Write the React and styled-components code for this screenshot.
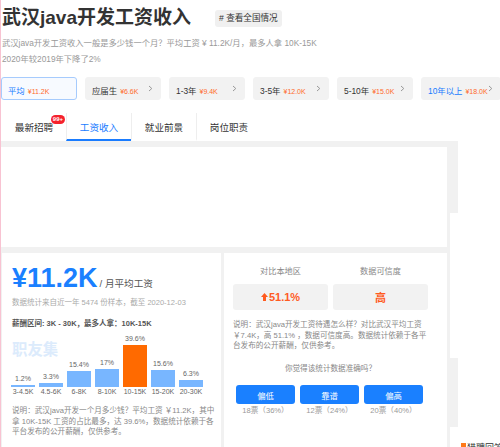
import React from "react";
import styled, { createGlobalStyle } from "styled-components";

const GlobalStyle = createGlobalStyle`
  html, body {
    margin: 0;
    padding: 0;
    background: #fff;
  }
  body {
    font-family: "Liberation Sans", "Noto Sans CJK SC", sans-serif;
    color: #333;
  }
`;

const levels = [
  { label: "平均", price: "¥11.2K", active: true },
  { label: "应届生", price: "¥6.6K" },
  { label: "1-3年", price: "¥9.4K" },
  { label: "3-5年", price: "¥12.0K" },
  { label: "5-10年", price: "¥15.0K" },
  { label: "10年以上", price: "¥18.0K", highlight: true },
];

const navTabs = ["最新招聘", "工资收入", "就业前景", "岗位职责"];

const bars = [
  { range: "3-4.5K", pct: 1.2 },
  { range: "4.5-6K", pct: 3.3 },
  { range: "6-8K", pct: 15.4 },
  { range: "8-10K", pct: 17 },
  { range: "10-15K", pct: 39.6, top: true },
  { range: "15-20K", pct: 15.6 },
  { range: "20-30K", pct: 6.3 },
];

const votes = [
  { label: "偏低", count: "18票（36%）" },
  { label: "靠谱", count: "12票（24%）" },
  { label: "偏高", count: "20票（40%）" },
];

const App = () => {
  return (
    <>
      <GlobalStyle />
      <Page>
        <Header>
          <TitleRow>
            <Title>武汉java开发工资收入</Title>
            <NationBadge># 查看全国情况</NationBadge>
          </TitleRow>
          <Summary>
            武汉java开发工资收入一般是多少钱一个月？平均工资 ¥ 11.2K/月，最多人拿 10K-15K
            <br />
            2020年较2019年下降了2%
          </Summary>
          <LevelRow>
            {levels.map((l) => (
              <LevelTab key={l.label} $active={l.active}>
                <span>
                  <LevelName $blue={l.active || l.highlight}>{l.label}</LevelName>
                  <LevelPrice>{l.price}</LevelPrice>
                </span>
                {!l.active && (
                  <svg width="5" height="7" viewBox="0 0 5 7">
                    <polyline points="1,1 3.8,3.5 1,6" fill="none" stroke="#999" strokeWidth="1" />
                  </svg>
                )}
              </LevelTab>
            ))}
          </LevelRow>
        </Header>

        <NavBar>
          {navTabs.map((t, i) => (
            <NavTab key={t} $active={i === 1} $first={i === 0}>
              {t}
              {i === 0 && <HotBadge>99+</HotBadge>}
            </NavTab>
          ))}
        </NavBar>

        <Content>
          <Main>
            <Panel />
            <CardRow>
              <Card>
                <BigRow>
                  <BigNumber>¥11.2K</BigNumber>
                  <Unit>/ 月平均工资</Unit>
                </BigRow>
                <Note>数据统计来自近一年 5474 份样本，截至 2020-12-03</Note>
                <RangeText>薪酬区间: 3K - 30K，最多人拿：10K-15K</RangeText>
                <Chart>
                  <Watermark>职友集</Watermark>
                  {bars.map((b) => (
                    <Column key={b.range}>
                      <Pct>{b.pct}%</Pct>
                      <Bar $top={b.top} style={{ height: Math.max(2, b.pct * 1.06) }} />
                      <RangeLabel>{b.range}</RangeLabel>
                    </Column>
                  ))}
                </Chart>
                <Explain>
                  说明：武汉java开发一个月多少钱？平均工资 ￥11.2K，其中
                  <br />
                  拿 10K-15K 工资的占比最多，达 39.6%，数据统计依赖于各
                  <br />
                  平台发布的公开薪酬，仅供参考。
                </Explain>
              </Card>

              <SideCard>
                <StatGrid>
                  <Stat>
                    <StatLabel>对比本地区</StatLabel>
                    <StatBox>
                      <svg width="7" height="8" viewBox="0 0 7 8">
                        <path d="M3.5 0 L7 4 L5 4 L5 8 L2 8 L2 4 L0 4 Z" fill="#ff5b1f" />
                      </svg>
                      51.1%
                    </StatBox>
                  </Stat>
                  <Stat>
                    <StatLabel>数据可信度</StatLabel>
                    <StatBox>高</StatBox>
                  </Stat>
                </StatGrid>
                <Explain $gap="10px">
                  说明：武汉java开发工资待遇怎么样？对比武汉平均工资
                  <br />
                  ￥7.4K，高 51.1% ，数据可信度高。数据统计依赖于各平
                  <br />
                  台发布的公开薪酬，仅供参考。
                </Explain>
                <Question>你觉得该统计数据准确吗？</Question>
                <VoteGrid>
                  {votes.map((v) => (
                    <Vote key={v.label}>
                      <VoteButton type="button">{v.label}</VoteButton>
                      <VoteCount>{v.count}</VoteCount>
                    </Vote>
                  ))}
                </VoteGrid>
              </SideCard>
            </CardRow>
          </Main>
          <Sidebar>
            <SideStub $h="72px" />
            <SideStub $h="69px" $mt="145px" />
          </Sidebar>
        </Content>

        <FloatTag>
          <i />
          猎聘回答
        </FloatTag>
      </Page>
    </>
  );
};

const Page = styled.div`
  position: relative;
  width: 499px;
  height: 447px;
  overflow: hidden;
  border-left: 1px solid #f8c3d2;
`;

const Header = styled.header`
  padding-top: 6px;
`;

const TitleRow = styled.div`
  display: flex;
  align-items: center;
  gap: 24px;
  padding-left: 1px;
`;

const Title = styled.h1`
  margin: 0;
  font-size: 19px;
  line-height: 24px;
  font-weight: bold;
  color: #333;
`;

const NationBadge = styled.span`
  height: 17px;
  line-height: 17px;
  padding: 0 4px;
  border-radius: 3px;
  background: #f0f0f0;
  font-size: 8.6px;
  color: #333;
`;

const Summary = styled.p`
  margin: 5px 0 0 1px;
  font-size: 8.3px;
  line-height: 16px;
  color: #999;
`;

const LevelRow = styled.div`
  display: flex;
  gap: 8px;
  margin-top: 10px;
`;

const LevelTab = styled.div`
  box-sizing: border-box;
  flex: 0 0 76px;
  height: 23px;
  display: flex;
  align-items: center;
  justify-content: space-between;
  padding: 0 7px 0 6px;
  border-radius: 3px;
  background: ${(p) => (p.$active ? "#f7faff" : "#f2f2f2")};
  border: 1px solid ${(p) => (p.$active ? "#a6cbfd" : "#f2f2f2")};
  white-space: nowrap;
  line-height: 1;
  svg {
    display: block;
  }
`;

const LevelName = styled.span`
  font-size: 8.4px;
  color: ${(p) => (p.$blue ? "#1a7cff" : "#333")};
`;

const LevelPrice = styled.span`
  margin-left: 3px;
  font-size: 7px;
  color: #ff6a2b;
`;

const NavBar = styled.nav`
  display: flex;
  margin-top: 13px;
  height: 28px;
`;

const NavTab = styled.div`
  position: relative;
  box-sizing: border-box;
  width: 65px;
  display: flex;
  align-items: center;
  justify-content: center;
  font-size: 9.6px;
  color: ${(p) => (p.$active ? "#1a7cff" : "#333")};
  border-bottom: 2px solid ${(p) => (p.$active ? "#1a7cff" : "transparent")};
  border-left: 1px solid ${(p) => (p.$first ? "transparent" : "#eee")};
  padding-top: 2px;
`;

const HotBadge = styled.span`
  position: absolute;
  top: 2px;
  right: 1px;
  height: 9px;
  line-height: 9px;
  padding: 0 2px;
  border-radius: 5px;
  background: #f5222d;
  color: #fff;
  font-size: 6px;
  font-weight: bold;
`;

const Content = styled.div`
  display: flex;
`;

const Main = styled.main`
  width: 449px;
  background: #f1f1f1;
  padding: 6px 3px 0 0;
  box-sizing: border-box;
`;

const Panel = styled.div`
  height: 100px;
  background: #fff;
`;

const CardRow = styled.div`
  display: grid;
  grid-template-columns: 219px 1fr;
  gap: 3px;
  margin-top: 6px;
  padding-left: 1px;
  height: 200px;
`;

const Card = styled.section`
  background: #fff;
  padding: 9px 4px 0 10px;
`;

const BigRow = styled.div`
  display: flex;
  align-items: baseline;
  gap: 2px;
`;

const BigNumber = styled.span`
  font-size: 27px;
  line-height: 32px;
  font-weight: bold;
  color: #1a80ff;
`;

const Unit = styled.span`
  font-size: 9.6px;
  color: #555;
`;

const Note = styled.div`
  margin-top: 3px;
  font-size: 7.5px;
  line-height: 12px;
  color: #aaa;
`;

const RangeText = styled.div`
  margin-top: 9px;
  font-size: 7.5px;
  line-height: 12px;
  font-weight: bold;
  color: #555;
`;

const Chart = styled.div`
  position: relative;
  display: flex;
  align-items: flex-end;
  gap: 4px;
  margin: 4px 0 0 -1px;
`;

const Watermark = styled.span`
  position: absolute;
  left: 1px;
  top: 3px;
  font-size: 15.4px;
  font-weight: bold;
  color: #dcebfc;
`;

const Column = styled.div`
  position: relative;
  width: 24px;
  display: flex;
  flex-direction: column;
  align-items: center;
`;

const Pct = styled.span`
  font-size: 7px;
  line-height: 9px;
  margin-bottom: 2px;
  color: #666;
`;

const Bar = styled.div`
  width: 24px;
  background: ${(p) => (p.$top ? "#ff6a00" : "#78b6ff")};
`;

const RangeLabel = styled.span`
  font-size: 7px;
  line-height: 10px;
  color: #666;
  white-space: nowrap;
`;

const Explain = styled.p`
  margin: ${(p) => p.$gap || "9px"} 0 0;
  font-size: 7.6px;
  line-height: 10.7px;
  color: #888;
  white-space: nowrap;
`;

const SideCard = styled.section`
  background: #fff;
  padding: 13px 19px 0 9px;
`;

const StatGrid = styled.div`
  display: grid;
  grid-template-columns: 1fr 1fr;
  gap: 5px;
`;

const Stat = styled.div`
  display: flex;
  flex-direction: column;
  align-items: stretch;
  gap: 6px;
`;

const StatLabel = styled.span`
  text-align: center;
  font-size: 8.2px;
  line-height: 12px;
  color: #888;
`;

const StatBox = styled.div`
  height: 26px;
  display: flex;
  align-items: center;
  justify-content: center;
  gap: 1px;
  border-radius: 3px;
  background: #f2f2f2;
  font-size: 11px;
  font-weight: bold;
  color: #ff5b1f;
`;

const Question = styled.div`
  margin-top: 11px;
  text-align: center;
  font-size: 7.6px;
  line-height: 12px;
  color: #888;
`;

const VoteGrid = styled.div`
  display: grid;
  grid-template-columns: repeat(3, 1fr);
  gap: 5px;
  margin-top: 10px;
  padding: 0 5px 0 3px;
`;

const Vote = styled.div`
  display: flex;
  flex-direction: column;
  align-items: stretch;
  gap: 2px;
`;

const VoteButton = styled.button`
  height: 19px;
  border: 0;
  border-radius: 3px;
  background: #1a80ff;
  color: #fff;
  font-family: inherit;
  font-size: 8.4px;
  padding: 0;
`;

const VoteCount = styled.span`
  text-align: center;
  font-size: 7.6px;
  line-height: 10px;
  color: #999;
`;

const Sidebar = styled.aside`
  width: 8px;
  display: flex;
  flex-direction: column;
`;

const SideStub = styled.div`
  height: ${(p) => p.$h};
  margin-top: ${(p) => p.$mt || 0};
  background: #f1f1f1;
`;

const FloatTag = styled.div`
  position: absolute;
  left: 460px;
  top: 441px;
  display: flex;
  align-items: center;
  gap: 1px;
  font-size: 9px;
  color: #333;
  white-space: nowrap;
  i {
    width: 5px;
    height: 9px;
    background: #ff7a1a;
  }
`;

export default App;
